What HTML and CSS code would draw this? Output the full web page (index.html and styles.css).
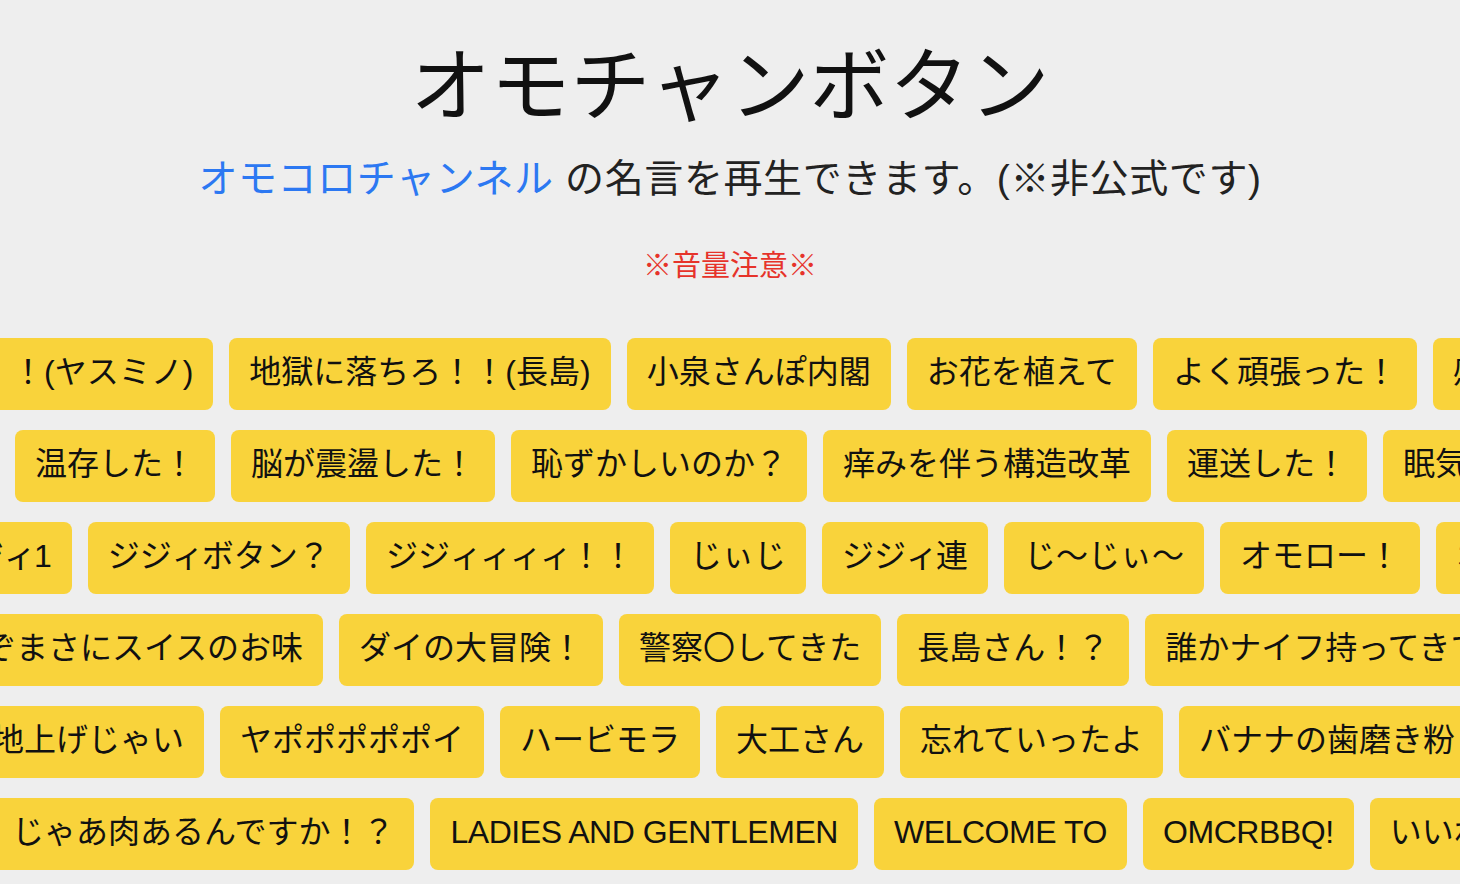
FILE: index.html
```html
<!DOCTYPE html>
<html lang="ja">
<head>
<meta charset="utf-8">
<title>オモチャンボタン</title>
<link rel="stylesheet" href="styles.css">
</head>
<body>
<header class="hero">
  <h1 class="title">オモチャンボタン</h1>
  <p class="lead"><a href="#" class="channel">オモコロチャンネル</a> の名言を再生できます。(※非公式です)</p>
  <p class="warn">※音量注意※</p>
</header>
<main class="board">
  <div class="row row-1">
    <button class="btn">！！(ヤスミノ)</button>
    <button class="btn">地獄に落ちろ！！(長島)</button>
    <button class="btn">小泉さんぽ内閣</button>
    <button class="btn">お花を植えて</button>
    <button class="btn">よく頑張った！</button>
    <button class="btn">感動した！</button>
  </div>
  <div class="row row-2">
    <button class="btn">温存した！</button>
    <button class="btn">脳が震盪した！</button>
    <button class="btn">恥ずかしいのか？</button>
    <button class="btn">痒みを伴う構造改革</button>
    <button class="btn">運送した！</button>
    <button class="btn">眠気覚まし</button>
  </div>
  <div class="row row-3">
    <button class="btn">ジジ<span class="sk">ィ</span>1</button>
    <button class="btn">ジジ<span class="sk">ィ</span>ボタン？</button>
    <button class="btn">ジジ<span class="sk">ィィィィ</span>！！</button>
    <button class="btn">じぃじ</button>
    <button class="btn">ジジ<span class="sk">ィ</span>連</button>
    <button class="btn">じ〜じぃ〜</button>
    <button class="btn">オモロー！</button>
    <button class="btn">オモコロ</button>
  </div>
  <div class="row row-4">
    <button class="btn">これぞまさにスイスのお味</button>
    <button class="btn">ダイの大冒険！</button>
    <button class="btn">警察〇してきた</button>
    <button class="btn">長島さん！？</button>
    <button class="btn">誰かナイフ持ってきて</button>
  </div>
  <div class="row row-5">
    <button class="btn">地上げじゃい</button>
    <button class="btn">ヤポポポポポイ</button>
    <button class="btn">ハービモラ</button>
    <button class="btn">大工さん</button>
    <button class="btn">忘れていったよ</button>
    <button class="btn">バナナの歯磨き粉</button>
  </div>
  <div class="row row-6">
    <button class="btn">じゃあ肉あるんですか！？</button>
    <button class="btn latin">LADIES AND GENTLEMEN</button>
    <button class="btn latin">WELCOME TO</button>
    <button class="btn latin">OMCRBBQ!</button>
    <button class="btn">いいね！</button>
  </div>
</main>
</body>
</html>
```

FILE: styles.css
```css
html, body {
  margin: 0;
  padding: 0;
}

body {
  background: #eeeeee;
  color: #111111;
  font-family: "Liberation Sans", "Noto Sans CJK JP", sans-serif;
  overflow: hidden;
  height: 884px;
}

.hero {
  display: flex;
  flex-direction: column;
  align-items: center;
}

.title {
  margin: 39px 0 0;
  font-size: 80px;
  font-weight: 400;
  line-height: 96px;
}

.lead {
  margin: 20px 0 0;
  font-size: 39px;
  line-height: 47px;
  letter-spacing: 0.6px;
  color: #222222;
}

.channel {
  color: #2c78f2;
  text-decoration: none;
}

.warn {
  margin: 47px 0 0;
  font-size: 29px;
  line-height: 35px;
  color: #e6332a;
}

.board {
  display: flex;
  flex-direction: column;
  gap: 20px;
  margin-top: 54px;
}

.row {
  display: flex;
  gap: 16px;
  white-space: nowrap;
}

.row-1 { margin-left: -40px; }
.row-2 { margin-left: 15px; }
.row-3 { margin-left: -80px; }
.row-4 { margin-left: -100px; }
.row-5 { margin-left: -28px; }
.row-6 { margin-left: -8px; }

.btn {
  flex: none;
  box-sizing: border-box;
  height: 72px;
  padding: 0 20px 4px;
  display: flex;
  align-items: center;
  border: 0;
  border-radius: 8px;
  background: #f9d33b;
  color: #111111;
  font-family: inherit;
  font-size: 32px;
  line-height: 1;
  cursor: pointer;
}

.sk {
  letter-spacing: -2px;
}

.latin {
  letter-spacing: -0.45px;
}
```
